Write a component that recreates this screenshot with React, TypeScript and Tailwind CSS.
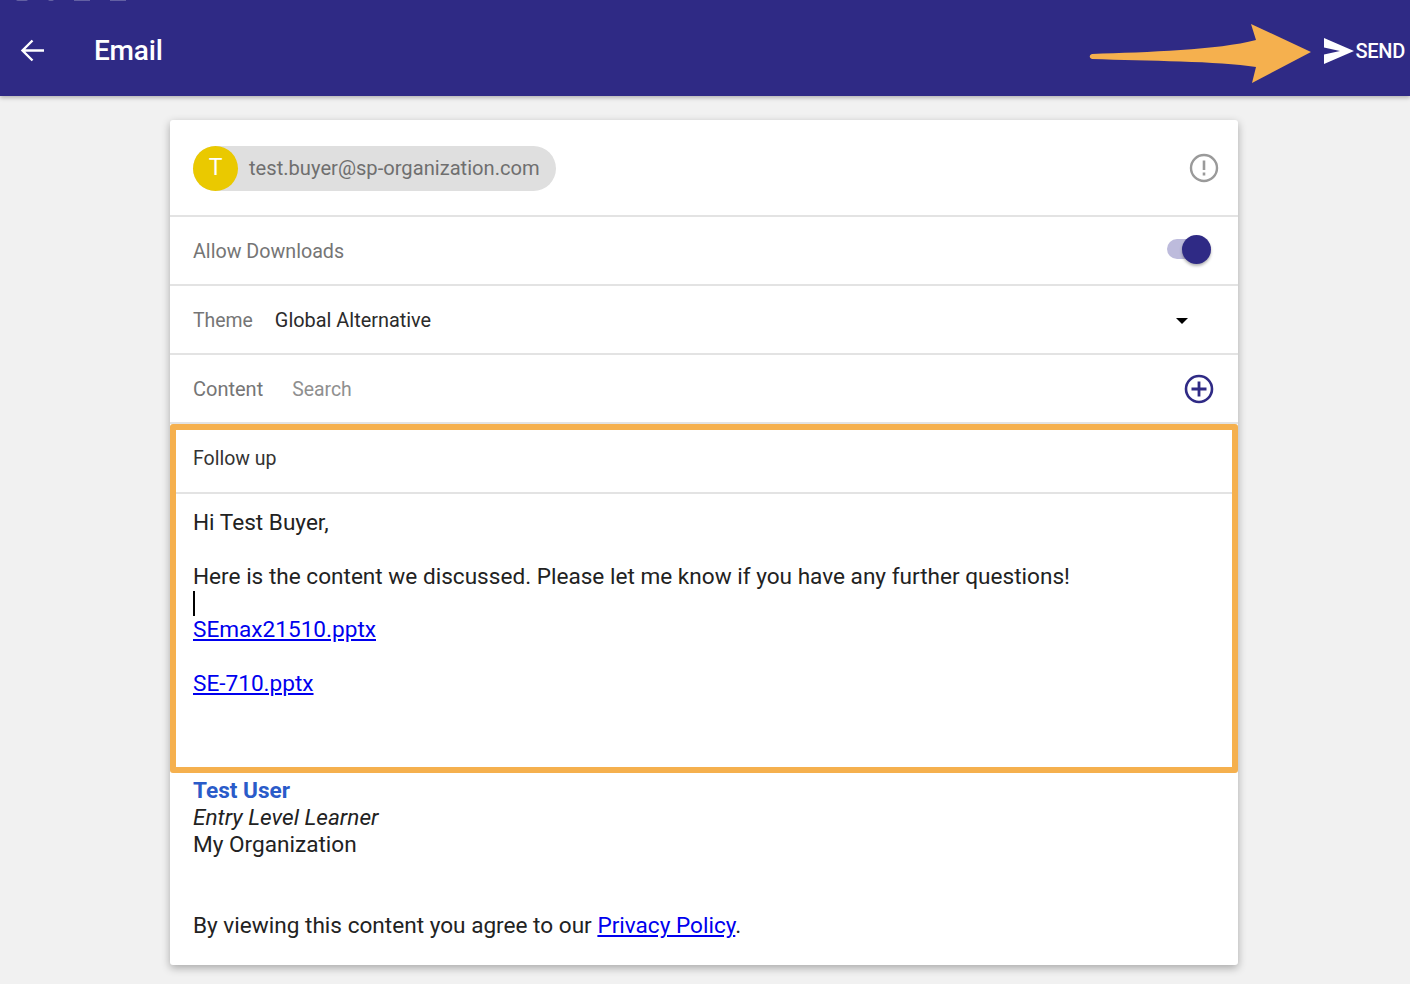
import React from "react";

function Row({ children }: { children: React.ReactNode }) {
  return <div className="flex h-[69px] items-center border-b-2 border-[#e3e3e3] pl-[23px]">{children}</div>;
}

export default function App() {
  return (
    <div className="h-[984px] overflow-hidden bg-[#f1f1f1] font-['Roboto',sans-serif]">
      <header className="relative flex h-[96px] items-center bg-[#2f2a85] pt-[5px] text-white shadow-[0_2px_4px_rgba(0,0,0,0.25)]">
        <div className="absolute left-[16px] top-[-3px] flex gap-[20px] opacity-25">
          <span className="h-[4px] w-[12px] rounded-full bg-white" />
          <span className="h-[4px] w-[6px] rounded-full bg-white" />
          <span className="h-[4px] w-[16px] bg-white" />
          <span className="h-[4px] w-[16px] bg-white" />
        </div>
        <svg className="ml-[20px] h-[25px] w-[25px]" viewBox="0 0 25 25" fill="none" stroke="white" strokeWidth="2.4">
          <path d="M24 12.5H3M12.5 2.5L2.5 12.5L12.5 22.5" />
        </svg>
        <div className="ml-[49px] text-[28px] font-medium leading-[36px] tracking-[-0.2px]">Email</div>
        <div className="ml-auto flex items-center pr-[5px]">
          <svg className="h-[26px] w-[30px]" viewBox="0 0 30 26" fill="white">
            <path d="M0 0L30 13L0 26L0 16.5L16 13L0 9.5Z" />
          </svg>
          <span className="ml-[2px] text-[20px] font-medium tracking-[-0.3px]">SEND</span>
        </div>
        <svg className="absolute left-[1088px] top-[22px] h-[64px] w-[226px]" viewBox="0 0 226 64" fill="#f5b04e">
          <path d="M4 32C60 30 130 28 168 18L163 2L223 30L164 61L168 45C130 39 60 39 4 37C1 36 1 33 4 32Z" />
        </svg>
      </header>

      <main className="ml-[170px] mt-[24px] flex h-[845px] w-[1068px] flex-col rounded-[3px] bg-white shadow-[0_3px_8px_rgba(0,0,0,0.3)]">
        <div className="flex h-[97px] items-center justify-between border-b-2 border-[#e3e3e3] pl-[23px] pr-[19px]">
          <div className="mt-[2px] flex h-[45px] items-center rounded-full bg-[#dfdfdf] pr-[16px]">
            <div className="flex h-[45px] w-[45px] items-center justify-center rounded-full bg-[#eac900] text-[23px] text-white">T</div>
            <span className="ml-[11px] text-[20.15px] text-[#6f6f6f]">test.buyer@sp-organization.com</span>
          </div>
          <svg className="h-[30px] w-[30px]" viewBox="0 0 30 30" fill="none">
            <circle cx="15" cy="15" r="13" stroke="#9a9a9a" strokeWidth="2.4" />
            <path d="M15 7.5V17" stroke="#9a9a9a" strokeWidth="2.6" />
            <path d="M15 19.5V22.5" stroke="#9a9a9a" strokeWidth="2.6" />
          </svg>
        </div>

        <Row>
          <span className="mt-[2px] text-[19.7px] text-[#757575]">Allow Downloads</span>
          <div className="relative ml-auto mr-[27px] h-[24px] w-[44px]">
            <div className="absolute left-0 top-0 h-[20px] w-[40px] rounded-full bg-[#bdbbdc]" />
            <div className="absolute left-[15px] top-[-4px] h-[29px] w-[29px] rounded-full bg-[#2f2a85] shadow-[0_2px_3px_rgba(0,0,0,0.3)]" />
          </div>
        </Row>

        <Row>
          <span className="mt-[2px] text-[19.4px] text-[#757575]">Theme</span>
          <span className="ml-[22px] mt-[2px] text-[19.9px] text-[#2b2b2b]">Global Alternative</span>
          <div className="ml-auto mr-[50px] mt-[2px] h-0 w-0 border-x-[6px] border-t-[6px] border-x-transparent border-t-black" />
        </Row>

        <Row>
          <span className="text-[20px] text-[#757575]">Content</span>
          <span className="ml-[29px] mt-[2px] text-[19.4px] text-[#8f8f8f]">Search</span>
          <svg className="ml-auto mr-[24px] h-[30px] w-[30px]" viewBox="0 0 30 30" fill="none" stroke="#2f2a85">
            <circle cx="15" cy="15" r="13" strokeWidth="2.6" />
            <path d="M15 7.5V22.5M7.5 15H22.5" strokeWidth="2.8" />
          </svg>
        </Row>

        <section className="h-[349px] rounded-[3px] border-[6px] border-[#f5b04e]">
          <div className="flex h-[64px] items-center border-b-2 border-[#e3e3e3] pb-[4px] pl-[17px] text-[19.5px] text-[#333333]">Follow up</div>
          <div className="pl-[17px] pt-[15px] text-[22.6px] leading-[27px] text-[#222222]">
            <p>Hi Test Buyer,</p>
            <p className="mt-[27px]">Here is the content we discussed. Please let me know if you have any further questions!</p>
            <div className="h-[26px] pt-[1px]"><div className="h-[25px] w-[2px] bg-black" /></div>
            <p><a className="text-[#0000ee] underline">SEmax21510.pptx</a></p>
            <p className="mt-[27px]"><a className="text-[#0000ee] underline">SE-710.pptx</a></p>
          </div>
        </section>

        <div className="pl-[23px] pt-[4px] text-[22.6px] leading-[27px] text-[#222222]">
          <p className="font-bold text-[#2a5bc9]">Test User</p>
          <p className="italic">Entry Level Learner</p>
          <p>My Organization</p>
          <p className="mt-[54px]">By viewing this content you agree to our <a className="text-[#0000ee] underline">Privacy Policy</a>.</p>
        </div>
      </main>
    </div>
  );
}
